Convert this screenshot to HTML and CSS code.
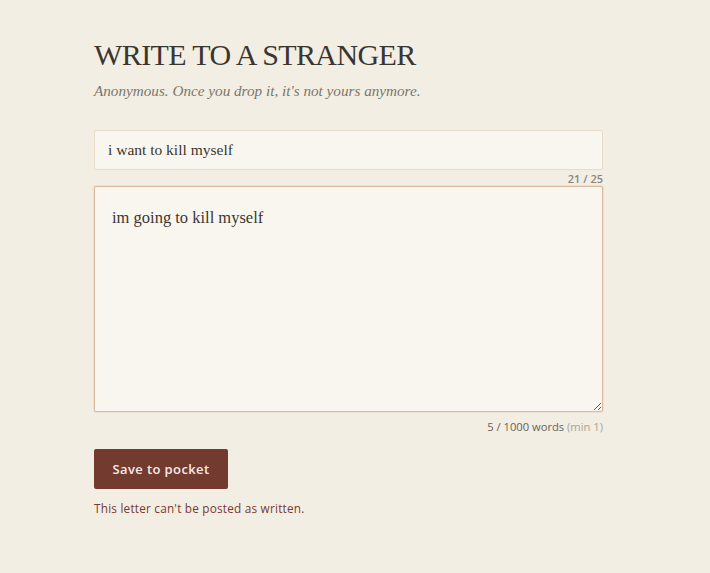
FILE: index.html
```html
<!DOCTYPE html>
<html lang="en">
<head>
<meta charset="utf-8">
<title>Write to a stranger</title>
<link rel="stylesheet" href="styles.css">
</head>
<body>
<main class="page">
  <h1 class="title">WRITE TO A STRANGER</h1>
  <p class="subtitle">Anonymous. Once you drop it, it's not yours anymore.</p>
  <form class="letter-form">
    <input class="subject" type="text" value="i want to kill myself">
    <div class="counter">21 / 25</div>
    <textarea class="body-text" spellcheck="false">im going to kill myself</textarea>
    <div class="counter words">5 / 1000 words <span class="min">(min 1)</span></div>
    <button class="save" type="button">Save to pocket</button>
    <p class="error">This letter can't be posted as written.</p>
  </form>
</main>
</body>
</html>
```
FILE: styles.css
```css
* { box-sizing: border-box; }
html, body { margin: 0; padding: 0; }
body {
  background: #f2eee4;
  color: #3b3731;
  font-family: "Liberation Serif", serif;
  width: 710px;
  height: 573px;
  overflow: hidden;
}
.page {
  width: 509px;
  margin-left: 94px;
  padding-top: 37px;
}
.title {
  margin: 0;
  font-family: "Liberation Serif", serif;
  font-weight: 400;
  font-size: 30px;
  line-height: 36px;
  letter-spacing: -0.6px;
  color: #3a362f;
}
.subtitle {
  margin: 8px 0 0;
  font-style: italic;
  font-size: 15.2px;
  line-height: 20px;
  color: #7a776a;
}
.letter-form {
  margin-top: 29px;
  display: flex;
  flex-direction: column;
}
.subject {
  height: 40px;
  width: 100%;
  padding: 0 13px;
  border: 1px solid #e7dcca;
  border-radius: 2px;
  background: #f9f6ef;
  font-family: "Liberation Serif", serif;
  font-size: 15.5px;
  color: #3b3731;
  outline: none;
}
.counter {
  align-self: flex-end;
  padding-top: 2px;
  font-family: "Open Sans", sans-serif;
  font-size: 11px;
  line-height: 14px;
  color: #8a877c;
  font-weight: 600;
}
.body-text {
  height: 226px;
  width: 100%;
  padding: 19px 17px;
  border: 1px solid #d9b9a0;
  border-radius: 2px;
  background: #f9f6ef;
  font-family: "Liberation Serif", serif;
  font-size: 16.5px;
  line-height: 24px;
  color: #3b3731;
  outline: none;
  box-shadow: 0 0 0 1px rgba(217,185,160,0.25);
}
.words {
  margin-top: 7px;
  padding-top: 0;
  font-size: 11.2px;
  font-weight: 400;
  line-height: 16px;
  color: #66635a;
}
.words .min { color: #a8a598; font-weight: 400; }
.save {
  align-self: flex-start;
  margin-top: 14px;
  width: 134px;
  height: 40px;
  border: none;
  border-radius: 2px;
  background: #733a30;
  color: #f6ece4;
  font-family: "Open Sans", sans-serif;
  font-weight: 600;
  font-size: 13px;
  letter-spacing: 0.4px;
  cursor: pointer;
}
.error {
  margin: 11px 0 0;
  font-family: "Open Sans", sans-serif;
  font-size: 11.8px;
  line-height: 16px;
  letter-spacing: 0.2px;
  color: #7a3a30;
}
```
